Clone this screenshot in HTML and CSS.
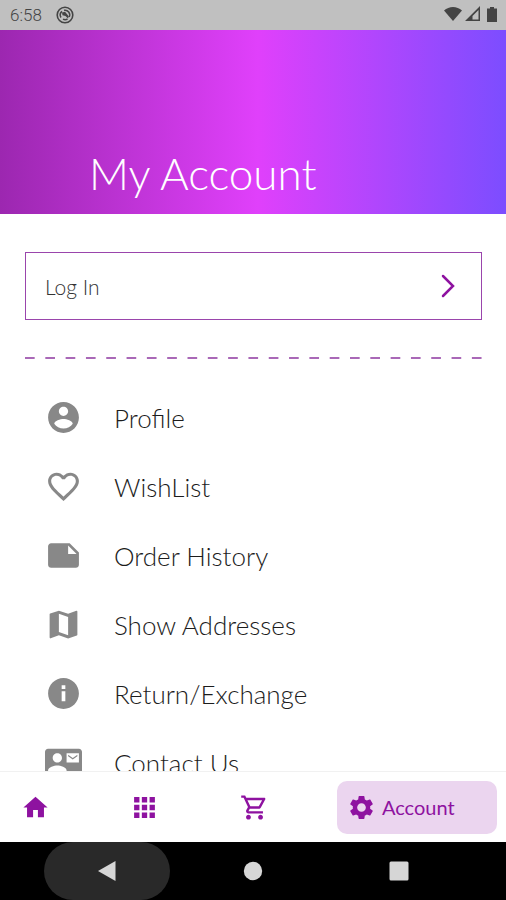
FILE: index.html
```html
<!DOCTYPE html>
<html lang="en">
<head>
<meta charset="utf-8">
<meta name="viewport" content="width=device-width, initial-scale=1">
<title>My Account</title>
<link rel="stylesheet" href="styles.css">
</head>
<body>
<div class="status">
  <time>6:58</time>
  <svg class="status-app" viewBox="0 0 18 18"><circle cx="9" cy="9" r="7.8" fill="none" stroke="currentColor" stroke-width="1.6"/><path d="M5 11.500A4.700 4.700 0 0 1 6 5.400M8 4.300A4.700 4.700 0 0 1 13.200 11M11.500 13A4.700 4.700 0 0 1 7 13.200" fill="none" stroke="currentColor" stroke-width="1.5"/><path d="M6 6.500l3-.8 3.800 4.500-.8 2.300-2.500-2.500-3-.8z"/></svg>
  <svg class="status-icons" viewBox="0 0 54 18"><path d="M0 4.500C5-.2 13-.2 18 4.500L9 15z"/><path d="M36 0v15H21zM34.500 4l-6 6v3.500h6z" fill-rule="evenodd"/><path d="M43 2.500h3V1h4v1.500h3V16H43z"/></svg>
</div>
<header class="hero"><h1>My Account</h1></header>
<main class="content">
  <a class="login" href="#login">Log In
    <svg viewBox="0 0 16 26"><path d="M3 3l10 10L3 23"/></svg>
  </a>
  <hr class="dashes">
  <ul class="menu">
    <li><a href="#profile"><svg viewBox="0 0 24 24"><path d="M12 2C6.480 2 2 6.480 2 12s4.480 10 10 10 10-4.480 10-10S17.520 2 12 2zm0 3c1.660 0 3 1.340 3 3s-1.340 3-3 3-3-1.340-3-3 1.340-3 3-3zm0 14.200c-2.500 0-4.710-1.280-6-3.220.03-1.990 4-3.080 6-3.080 1.990 0 5.970 1.090 6 3.080-1.290 1.940-3.500 3.220-6 3.220z"/></svg>Profile</a></li>
    <li><a href="#wishlist"><svg viewBox="0 0 24 24"><path d="M16.500 3c-1.740 0-3.410.81-4.500 2.090C10.910 3.810 9.240 3 7.500 3 4.420 3 2 5.420 2 8.500c0 3.780 3.400 6.860 8.550 11.540L12 21.350l1.450-1.320C18.600 15.360 22 12.280 22 8.500 22 5.420 19.580 3 16.500 3zm-4.400 15.550l-.1.100-.1-.1C7.140 14.240 4 11.390 4 8.500 4 6.500 5.500 5 7.500 5c1.540 0 3.040.99 3.570 2.360h1.870C13.460 5.990 14.960 5 16.500 5c2 0 3.500 1.500 3.500 3.500 0 2.890-3.140 5.740-7.900 10.050z"/></svg>WishList</a></li>
    <li><a href="#orders"><svg viewBox="0 0 24 24"><path d="M22 10l-6-6H4c-1.100 0-2 .9-2 2v12.010c0 1.100.9 1.990 2 1.990h16c1.100 0 2-.9 2-2v-8zm-7-4.500l5.500 5.500H15V5.500z"/></svg>Order History</a></li>
    <li><a href="#addresses"><svg viewBox="0 0 24 24"><path d="M20.500 3l-.16.03L15 5.100 9 3 3.360 4.900c-.21.07-.36.25-.36.480V20.500c0 .28.22.5.5.5l.16-.03L9 18.900l6 2.100 5.640-1.900c.21-.07.36-.25.36-.48V3.500c0-.28-.22-.5-.5-.5zM15 19l-6-2.110V5l6 2.110V19z"/></svg>Show Addresses</a></li>
    <li><a href="#returns"><svg viewBox="0 0 24 24"><path d="M12 2C6.480 2 2 6.480 2 12s4.480 10 10 10 10-4.480 10-10S17.520 2 12 2zm1.200 15h-2.400v-6.400h2.400V17zm0-8h-2.400V6.700h2.400V9z"/></svg>Return/Exchange</a></li>
    <li><a href="#contact"><svg viewBox="0 0 24 24"><path d="M21 8V7l-3 2-3-2v1l3 2 3-2zm1-5H2C.9 3 0 3.900 0 5v14c0 1.100.9 2 2 2h20c1.100 0 1.990-.9 1.990-2L24 5c0-1.100-.9-2-2-2zM8 6c1.660 0 3 1.340 3 3s-1.340 3-3 3-3-1.340-3-3 1.340-3 3-3zm6 12H2v-1c0-2 4-3.100 6-3.100s6 1.100 6 3.100v1zm8-6h-8V6h8v6z"/></svg>Contact Us</a></li>
  </ul>
</main>
<nav class="tabs">
  <a class="tab" href="#home" aria-label="Home"><svg viewBox="0 0 24 24"><path d="M10 20v-6h4v6h5v-8h3L12 3 2 12h3v8z"/></svg></a>
  <a class="tab" href="#categories" aria-label="Categories"><svg viewBox="0 0 24 24"><path d="M3.400 3.400h4.400v4.400H3.400zM9.800 3.400h4.400v4.400H9.800zM16.200 3.400h4.400v4.400h-4.400zM3.400 9.800h4.400v4.400H3.400zM9.800 9.800h4.400v4.400H9.800zM16.200 9.800h4.400v4.400h-4.400zM3.400 16.200h4.400v4.400H3.400zM9.800 16.200h4.400v4.400H9.800zM16.200 16.200h4.400v4.400h-4.400z"/></svg></a>
  <a class="tab" href="#cart" aria-label="Cart"><svg viewBox="0 0 24 24"><path d="M15.550 13c.75 0 1.410-.41 1.750-1.030l3.580-6.490c.37-.66-.11-1.480-.87-1.480H5.210l-.94-2H1v2h2l3.600 7.590-1.350 2.440C4.520 15.370 5.480 17 7 17h12v-2H7l1.100-2h7.450zM6.160 6h12.150l-2.760 5H8.530L6.160 6zM7 18c-1.100 0-1.990.9-1.990 2S5.900 22 7 22s2-.9 2-2-.9-2-2-2zm10 0c-1.100 0-1.990.9-1.990 2s.89 2 1.990 2 2-.9 2-2-.9-2-2-2z"/></svg></a>
  <a class="tab tab-active" href="#account" aria-current="page"><svg viewBox="0 0 24 24"><path d="M19.140 12.940c.04-.3.06-.61.06-.94 0-.32-.02-.64-.07-.94l2.030-1.580c.18-.14.23-.41.12-.61l-1.920-3.320c-.12-.22-.37-.29-.59-.22l-2.390.96c-.5-.38-1.030-.7-1.620-.94L14.400 2.810c-.04-.24-.24-.41-.48-.41h-3.840c-.24 0-.43.17-.47.41L9.250 5.350c-.59.24-1.130.57-1.620.94l-2.390-.96c-.22-.08-.47 0-.59.22L2.740 8.870c-.12.21-.08.47.12.61l2.030 1.580c-.05.3-.09.63-.09.94s.02.64.07.94l-2.030 1.580c-.18.14-.23.41-.12.61l1.920 3.320c.12.22.37.29.59.22l2.390-.96c.5.38 1.030.7 1.620.94l.36 2.540c.05.24.24.41.48.41h3.840c.24 0 .44-.17.47-.41l.36-2.540c.59-.24 1.130-.56 1.620-.94l2.390.96c.22.08.47 0 .59-.22l1.920-3.320c.12-.22.07-.47-.12-.61l-2.010-1.580zM12 15.600c-1.980 0-3.600-1.620-3.600-3.600s1.620-3.600 3.600-3.600 3.600 1.620 3.600 3.600-1.620 3.600-3.600 3.600z"/></svg>Account</a>
</nav>
<div class="system">
  <button class="pressed" aria-label="Back"><svg viewBox="0 0 20 22"><path d="M18.500 1v20L1 11z"/></svg></button>
  <button aria-label="System home"><svg viewBox="0 0 20 22"><circle cx="10" cy="11" r="9.200"/></svg></button>
  <button aria-label="Recent apps"><svg viewBox="0 0 20 22"><rect x=".5" y="1.500" width="19" height="19" rx="1.500"/></svg></button>
</div>
</body>
</html>
```
FILE: styles.css
```css
* { box-sizing: border-box; }
body {
  margin: 0;
  height: 100vh;
  display: flex;
  flex-direction: column;
  background: #fff;
  color: #1c1c1c;
  font-family: "Century Gothic", Lato, sans-serif;
  font-weight: 300;
}
a { color: inherit; text-decoration: none; }
svg { display: block; fill: currentColor; flex: none; }

.status {
  flex: none;
  height: 30px;
  padding: 0 8px 0 10px;
  display: flex;
  align-items: center;
  background: #c0c0c0;
  color: #444;
  font: 400 17px/30px Roboto, sans-serif;
}
.status time { font-weight: 300; }
.status-app { width: 18px; height: 18px; margin-left: 14px; }
.status-icons { width: 54px; height: 18px; margin-left: auto; }

.hero {
  flex: none;
  height: 184px;
  padding: 0 89px 16px;
  display: flex;
  align-items: flex-end;
  background: linear-gradient(90deg, #9c27b0, #e040fb 51%, #7c4dff);
  color: #fff;
}
h1 { margin: 0; font-size: 44px; line-height: 50px; font-weight: 300; }

.content { flex: 1; min-height: 0; overflow: hidden; padding: 38px 24px 0 25px; }
.login {
  height: 68px;
  padding: 0 25px 0 19px;
  display: flex;
  align-items: center;
  justify-content: space-between;
  border: 1px solid #9a45ac;
  color: #333;
  font-size: 21px;
}
.login svg {
  width: 16px;
  height: 26px;
  fill: none;
  stroke: #8e12a0;
  stroke-width: 2.5;
  stroke-linecap: round;
}
.dashes {
  height: 2px;
  margin: 37px 0 24px;
  border: 0;
  background: linear-gradient(90deg, #a968b7 10px, transparent 10px) 0 0 / calc((100% - 10px) / 22) 2px repeat-x;
}
.menu { margin: 0; padding: 0 20px; list-style: none; }
.menu a {
  height: 69px;
  display: flex;
  align-items: center;
  gap: 32px;
  font-size: 26px;
}
.menu svg { width: 37px; height: 37px; color: #888; }

.tabs {
  flex: none;
  height: 71px;
  padding: 0 9px;
  display: flex;
  align-items: center;
  justify-content: space-between;
  border-top: 1px solid #f1f1f1;
  background: #fff;
  color: #8e12a0;
}
.tab { height: 53px; padding: 0 12px; display: flex; align-items: center; }
.tab svg { width: 29px; height: 29px; }
.tab-active {
  width: 160px;
  padding: 0 10px;
  gap: 6px;
  border-radius: 10px;
  background: #ebd5ef;
  font-size: 20px;
  font-weight: 400;
}

.system {
  flex: none;
  height: 58px;
  display: flex;
  justify-content: center;
  gap: 20px;
  background: #000;
}
.system button {
  width: 126px;
  padding: 0;
  display: flex;
  align-items: center;
  justify-content: center;
  border: 0;
  border-radius: 29px;
  background: none;
  color: #d6d6d6;
}
.system .pressed { background: #292929; }
.system svg { width: 20px; height: 22px; }
```
